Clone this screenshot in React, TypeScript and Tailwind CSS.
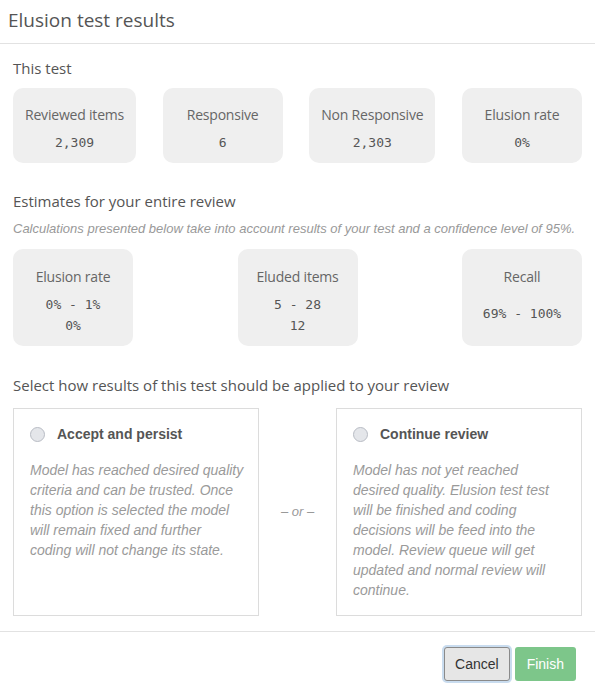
import React from "react";

const sans = "font-['Open_Sans',sans-serif]";
const mono = "font-['DejaVu_Sans_Mono',monospace]";

type Stat = { label: string; values: string[] };

const thisTest: Stat[] = [
  { label: "Reviewed items", values: ["2,309"] },
  { label: "Responsive", values: ["6"] },
  { label: "Non Responsive", values: ["2,303"] },
  { label: "Elusion rate", values: ["0%"] },
];

const estimates: Stat[] = [
  { label: "Elusion rate", values: ["0% - 1%", "0%"] },
  { label: "Eluded items", values: ["5 - 28", "12"] },
  { label: "Recall", values: ["69% - 100%"] },
];

const StatCard = ({ stat, tall }: { stat: Stat; tall?: boolean }) => (
  <div
    className={`flex min-w-[120px] flex-col items-center rounded-[10px] bg-[#efefef] px-3 ${
      tall ? "h-[97px] pt-[18px]" : "h-[75px] pt-[17px]"
    }`}
  >
    <p className={`${sans} text-[14px] leading-5 tracking-[-0.2px] text-[#666]`}>{stat.label}</p>
    <div
      className={`${mono} flex flex-1 flex-col items-center text-[13px] leading-[21px] text-[#555] ${
        tall ? (stat.values.length === 1 ? "justify-center pb-[6px]" : "pt-[7px]") : "pt-[7px]"
      }`}
    >
      {stat.values.map((v) => (
        <span key={v}>{v}</span>
      ))}
    </div>
  </div>
);

const Option = ({ title, text, narrow }: { title: string; text: string; narrow?: boolean }) => (
  <div
    className={`h-[208px] w-[246px] border border-[#dcdcdc] pl-4 pt-[15px] ${narrow ? "pr-[28px]" : "pr-[13px]"}`}
  >
    <div className="flex items-center gap-3">
      <span className="h-[15px] w-[15px] rounded-full border border-[#b8bcc4] bg-[#e4e6ea]" />
      <span className="font-['Liberation_Sans',sans-serif] text-[14px] font-bold text-[#555]">{title}</span>
    </div>
    <p className="mt-[15px] font-['Liberation_Sans',sans-serif] text-[14px] italic leading-5 text-[#9a9a9a]">
      {text}
    </p>
  </div>
);

export default function App() {
  return (
    <div className="h-[695px] w-[595px] bg-white">
      <div className="border-b border-[#e2e2e2] px-2 pb-[9px] pt-[6px]">
        <h1 className={`${sans} text-[19px] leading-7 text-[#555]`}>Elusion test results</h1>
      </div>

      <div className="px-[13px]">
        <h2 className={`${sans} mt-[12px] text-[15px] leading-6 text-[#555]`}>This test</h2>
        <div className="mt-[8px] flex justify-between">
          {thisTest.map((s) => (
            <StatCard key={s.label} stat={s} />
          ))}
        </div>

        <h2 className={`${sans} mt-[26px] text-[15px] leading-6 text-[#555]`}>
          Estimates for your entire review
        </h2>
        <p className="mt-[8px] font-['Liberation_Sans',sans-serif] text-[13px] italic leading-4 text-[#999]">
          Calculations presented below take into account results of your test and a confidence level of 95%.
        </p>
        <div className="mt-[12px] flex justify-between">
          {estimates.map((s) => (
            <StatCard key={s.label} stat={s} tall />
          ))}
        </div>

        <h2 className={`${sans} mt-[27px] text-[15px] leading-6 text-[#555]`}>
          Select how results of this test should be applied to your review
        </h2>
        <div className="mt-[11px] flex items-center justify-between">
          <Option
            title="Accept and persist"
            text="Model has reached desired quality criteria and can be trusted. Once this option is selected the model will remain fixed and further coding will not change its state."
          />
          <span className="font-['Liberation_Sans',sans-serif] text-[13px] italic text-[#999]">– or –</span>
          <Option
            narrow
            title="Continue review"
            text="Model has not yet reached desired quality. Elusion test test will be finished and coding decisions will be feed into the model. Review queue will get updated and normal review will continue."
          />
        </div>
      </div>

      <div className="mt-[15px] flex justify-end gap-[5px] border-t border-[#e2e2e2] pr-[19px] pt-[15px]">
        <button
          type="button"
          className="h-[34px] rounded-[3px] border border-[#8a8a8a] bg-[#e6e6e6] px-[10px] font-['Liberation_Sans',sans-serif] text-[14px] text-[#333] shadow-[0_0_0_2px_#c9dcef]"
        >
          Cancel
        </button>
        <button
          type="button"
          className="h-[34px] rounded-[3px] bg-[#7dc68a] px-[12px] font-['Liberation_Sans',sans-serif] text-[14px] text-white"
        >
          Finish
        </button>
      </div>
    </div>
  );
}
